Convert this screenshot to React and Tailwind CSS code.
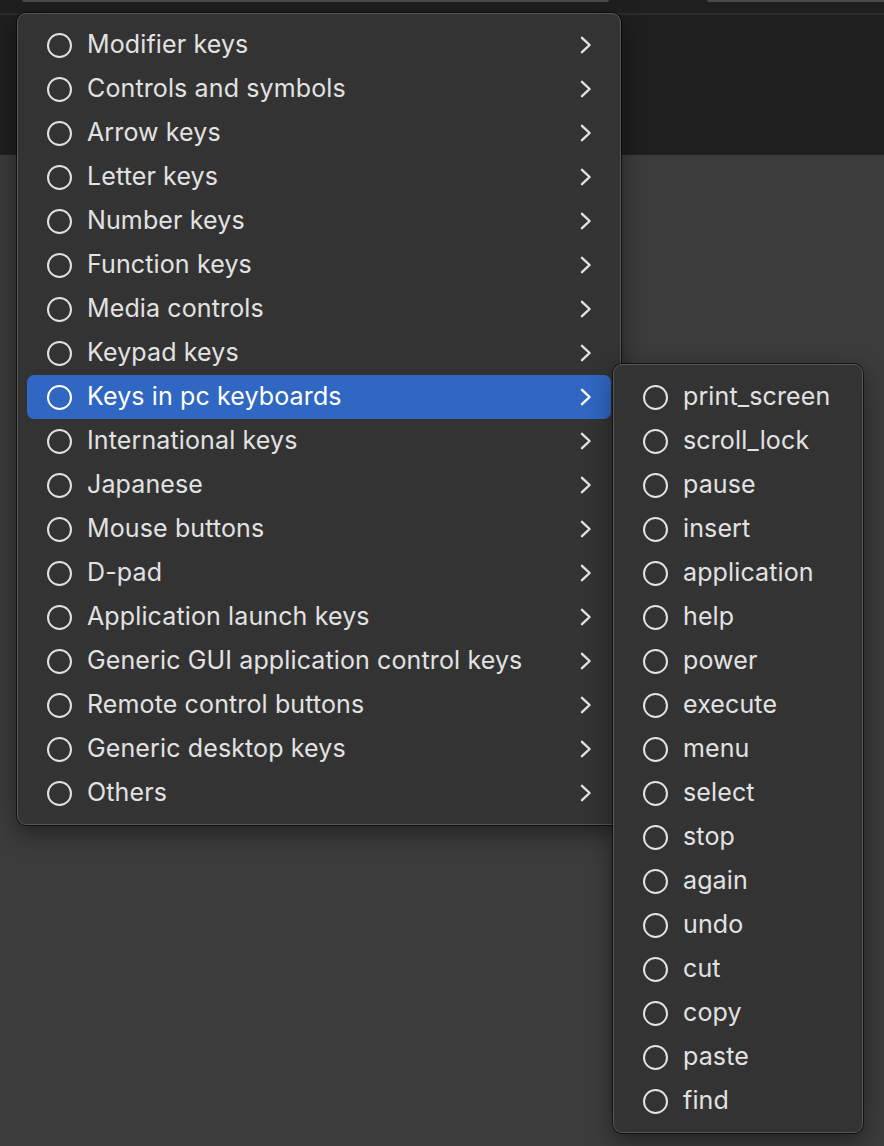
const groups = [
  'Modifier keys',
  'Controls and symbols',
  'Arrow keys',
  'Letter keys',
  'Number keys',
  'Function keys',
  'Media controls',
  'Keypad keys',
  'Keys in pc keyboards',
  'International keys',
  'Japanese',
  'Mouse buttons',
  'D-pad',
  'Application launch keys',
  'Generic GUI application control keys',
  'Remote control buttons',
  'Generic desktop keys',
  'Others',
]

const pcKeys = [
  'print_screen', 'scroll_lock', 'pause', 'insert', 'application', 'help', 'power',
  'execute', 'menu', 'select', 'stop', 'again', 'undo', 'cut', 'copy', 'paste', 'find',
]

function Radio({ active }) {
  return (
    <span
      className={`w-[25px] h-[25px] rounded-full border-2 shrink-0 ${active ? 'border-white' : 'border-[#e2e2e2]'}`}
    />
  )
}

function Chevron() {
  return (
    <svg width="12" height="18" viewBox="0 0 12 18" className="shrink-0" fill="none">
      <polyline points="2,1.8 9.6,9 2,16.2" stroke="currentColor" strokeWidth="2.4" strokeLinecap="round" strokeLinejoin="round" />
    </svg>
  )
}

function MenuRow({ label, active, submenu }) {
  return (
    <div
      className={`flex items-center h-[44px] pl-[20px] pr-[19px] rounded-[7px] ${active ? 'bg-[#3067c2] text-white' : 'text-[#e2e2e2]'}`}
    >
      <Radio active={active} />
      <span className="ml-[15px] flex-1 whitespace-nowrap">{label}</span>
      {submenu && <Chevron />}
    </div>
  )
}

export default function App() {
  return (
    <div
      className="relative w-[884px] h-[1146px] overflow-hidden bg-[#3c3c3c] text-[25px] tracking-[0.005em]"
      style={{ fontFamily: 'Inter, "Open Sans", "Liberation Sans", sans-serif' }}
    >
      {/* Fenster-Kopf */}
      <div className="h-[155px] bg-[#1f1f1f] flex flex-col">
        <div className="flex h-[2px]">
          <div className="ml-[22px] w-[587px] h-[2px] bg-[#4a4a4a] rounded-b" />
          <div className="ml-[98px] flex-1 h-[2px] bg-[#4a4a4a] rounded-bl" />
        </div>
        <div className="mt-[11px] h-[2px] bg-[#2c2c2c]" />
      </div>

      {/* Hauptmenü */}
      <div className="absolute left-[17px] top-[13px] w-[604px] pt-[9px] pb-[9px] px-[9px] rounded-[9px] bg-[#333333] border border-[#575757] shadow-[0_0_0_1px_rgba(0,0,0,0.6),0_8px_24px_rgba(0,0,0,0.45)]">
        {groups.map((g, i) => (
          <MenuRow key={i} label={g} active={i === 8} submenu />
        ))}
      </div>

      {/* Untermenü */}
      <div className="absolute left-[613px] top-[364px] w-[250px] pt-[10px] pb-[9px] px-[9px] rounded-[9px] bg-[#333333] border border-[#575757] shadow-[0_0_0_1px_rgba(0,0,0,0.6),0_8px_24px_rgba(0,0,0,0.45)]">
        {pcKeys.map((k, i) => (
          <div key={i} className="flex items-center h-[44px] pl-[20px] text-[#e2e2e2]">
            <Radio />
            <span className="ml-[15px] whitespace-nowrap">{k}</span>
          </div>
        ))}
      </div>
    </div>
  )
}
